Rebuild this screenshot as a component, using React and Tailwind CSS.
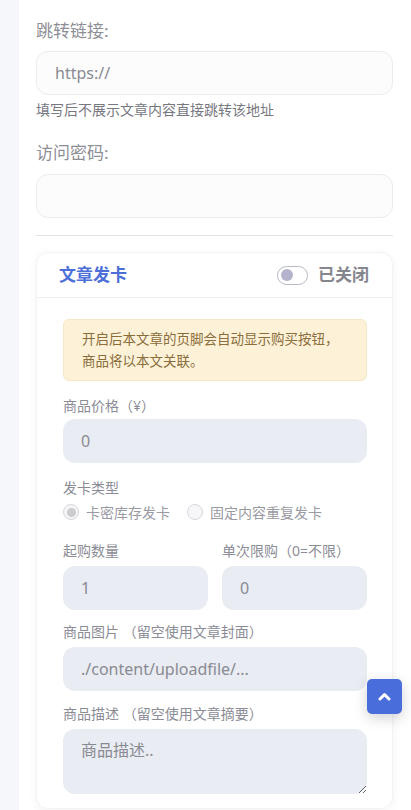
import React, { useState } from "react";

const font = { fontFamily: '"Noto Sans", "Noto Sans CJK SC", sans-serif' };

const Label = ({ children, className = "" }) => (
  <div className={`text-[14px] leading-[20px] text-[#8c8c96] ${className}`}>{children}</div>
);

const FillInput = ({ value, placeholder, className = "" }) => (
  <input
    defaultValue={value}
    placeholder={placeholder}
    className={`w-full h-[44px] rounded-[12px] bg-[#e9ecf3] px-[18px] text-[16px] text-[#8a8a92] placeholder-[#8a8a92] outline-none ${className}`}
  />
);

const Radio = ({ checked, label }) => (
  <label className="flex items-center gap-[7px]">
    <span className="w-[16px] h-[16px] rounded-full border border-[#d6d6dc] bg-[#f6f6f8] flex items-center justify-center">
      {checked && <span className="w-[9px] h-[9px] rounded-full bg-[#cbcbd0]" />}
    </span>
    <span className="text-[14px] text-[#9a9aa2]">{label}</span>
  </label>
);

export default function App() {
  const [on, setOn] = useState(false);

  return (
    <div className="w-[411px] h-[810px] overflow-hidden bg-[#f6f7fb] flex" style={font}>
      <div className="w-[19px] shrink-0" />
      <div className="flex-1 bg-white pt-[19px] pl-[17px] pr-[18px] relative">
        <div className="text-[17px] leading-[24px] text-[#8e8e96]">跳转链接:</div>
        <input
          placeholder="https://"
          className="mt-[8px] w-full h-[44px] rounded-[12px] border border-[#ececf0] bg-[#fcfcfd] px-[18px] text-[16px] placeholder-[#8a8a92] outline-none"
        />
        <div className="mt-[5px] text-[14px] leading-[20px] text-[#77777f]">填写后不展示文章内容直接跳转该地址</div>

        <div className="mt-[21px] text-[17px] leading-[24px] text-[#8e8e96]">访问密码:</div>
        <input className="mt-[9px] w-full h-[44px] rounded-[12px] border border-[#ececf0] bg-[#fcfcfd] px-[18px] text-[16px] outline-none" />

        <div className="mt-[17px] h-px bg-[#e3e3e8]" />

        <div className="mt-[16px] rounded-[12px] border border-[#f3f3f6] bg-white shadow-[0_2px_10px_rgba(30,40,80,0.05)]">
          <div className="h-[45px] px-[22px] flex items-center justify-between border-b border-[#efeff3]">
            <span className="text-[17px] font-bold text-[#4d6fd8]">文章发卡</span>
            <button onClick={() => setOn(!on)} className="flex items-center gap-[10px] pr-[1px]">
              <span className="w-[31px] h-[19px] rounded-full border border-[#b9b9c6] bg-white flex items-center px-[3px]">
                <span className="w-[12px] h-[12px] rounded-full bg-[#b3b3cc]" />
              </span>
              <span className="text-[17px] font-bold text-[#86868e]">已关闭</span>
            </button>
          </div>

          <div className="pt-[21px] pb-[14px] pl-[26px] pr-[25px]">
            <div className="rounded-[6px] border border-[#f7e8c4] bg-[#fdf2d8] pl-[18px] pr-[10px] py-[8px] text-[13.5px] leading-[22px] text-[#8a6d3b]">
              开启后本文章的页脚会自动显示购买按钮，<br />
              商品将以本文关联。
            </div>

            <Label className="mt-[15px]">商品价格（¥）</Label>
            <FillInput value="0" className="mt-[3px]" />

            <Label className="mt-[15px]">发卡类型</Label>
            <div className="mt-[4px] h-[20px] flex items-center gap-[17px]">
              <Radio checked label="卡密库存发卡" />
              <Radio label="固定内容重复发卡" />
            </div>

            <div className="mt-[19px] grid grid-cols-2 gap-x-[14px]">
              <div>
                <Label>起购数量</Label>
                <FillInput value="1" className="mt-[5px]" />
              </div>
              <div>
                <Label>单次限购（0=不限）</Label>
                <FillInput value="0" className="mt-[5px]" />
              </div>
            </div>

            <Label className="mt-[12px]">商品图片 （留空使用文章封面）</Label>
            <FillInput placeholder="./content/uploadfile/..." className="mt-[5px]" />

            <Label className="mt-[13px]">商品描述 （留空使用文章摘要）</Label>
            <textarea
              placeholder="商品描述.."
              className="mt-[5px] block w-full h-[65px] rounded-[12px] bg-[#e9ecf3] px-[18px] py-[9px] text-[16px] leading-[24px] placeholder-[#8a8a92] outline-none"
            />
          </div>
        </div>

        <button className="absolute left-[348px] top-[679px] w-[35px] h-[35px] rounded-[5px] bg-[#4a6ddc] flex items-center justify-center shadow-[0_4px_14px_rgba(0,0,0,0.18)]">
          <svg width="13" height="9" viewBox="0 0 13 9">
            <path d="M2 7 L6.5 2.5 L11 7" fill="none" stroke="white" strokeWidth="3" strokeLinecap="round" strokeLinejoin="round" />
          </svg>
        </button>
      </div>
    </div>
  );
}
